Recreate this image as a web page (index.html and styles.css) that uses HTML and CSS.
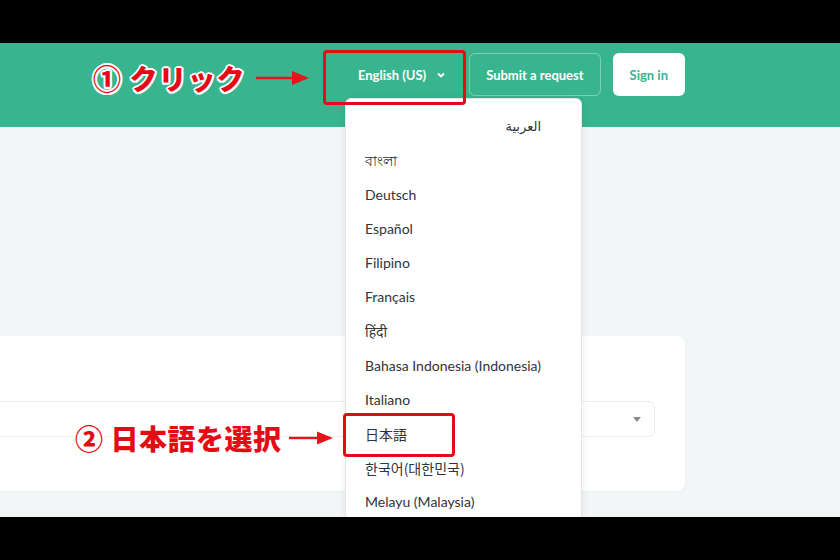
FILE: index.html
```html
<!DOCTYPE html>
<html lang="en">
<head>
<meta charset="utf-8">
<title>Language menu</title>
<link rel="stylesheet" href="styles.css">
</head>
<body>
<div class="screen">
  <header class="header">
    <nav class="nav">
      <button class="lang">English (US)
        <svg class="chev" width="8" height="6" viewBox="0 0 8 6"><path d="M1 1.5 L4 4.5 L7 1.5" fill="none" stroke="#fff" stroke-width="1.8"/></svg>
      </button>
      <a class="btn-outline">Submit a request</a>
      <a class="btn-white">Sign in</a>
    </nav>
  </header>
  <main class="main">
    <section class="card">
      <div class="select">
        <span class="caret"></span>
      </div>
    </section>
  </main>

  <ul class="menu">
    <li class="rtl" dir="rtl">العربية</li>
    <li>বাংলা</li>
    <li>Deutsch</li>
    <li>Español</li>
    <li>Filipino</li>
    <li>Français</li>
    <li>हिंदी</li>
    <li>Bahasa Indonesia (Indonesia)</li>
    <li>Italiano</li>
    <li class="ja">日本語</li>
    <li class="ko">한국어(대한민국)</li>
    <li>Melayu (Malaysia)</li>
  </ul>

  <div class="mark mark-1"></div>
  <div class="note note-1">
    <span class="note-text">① クリック</span>
    <svg class="arrow" width="54" height="16" viewBox="0 0 54 16"><path d="M0 8 H38" stroke="#e8141b" stroke-width="2.4"/><path d="M36 1 L53 8 L36 15 Z" fill="#e8141b"/></svg>
  </div>

  <div class="mark mark-2"></div>
  <div class="note note-2">
    <span class="note-text">② 日本語を選択</span>
    <svg class="arrow" width="45" height="16" viewBox="0 0 45 16"><path d="M0 8 H30" stroke="#e8141b" stroke-width="2.4"/><path d="M28 1.5 L44 8 L28 14.5 Z" fill="#e8141b"/></svg>
  </div>
</div>
</body>
</html>
```
FILE: styles.css
```css
* { box-sizing: border-box; }
html, body { margin: 0; padding: 0; }
body {
  background: #000;
  width: 840px;
  height: 560px;
  overflow: hidden;
  font-family: Lato, "Noto Sans", sans-serif;
}
.screen {
  position: relative;
  margin-top: 43px;
  height: 474px;
  overflow: hidden;
  background: #f2f6f6;
}
.header {
  height: 84px;
  background: #38b48f;
}
.nav {
  display: flex;
  justify-content: flex-end;
  align-items: flex-start;
  padding: 10px 155px 0 0;
}
.lang {
  display: flex;
  align-items: center;
  gap: 11px;
  height: 43px;
  padding: 0 16px 0 15px;
  margin-right: 8px;
  border: 0;
  background: transparent;
  color: #fff;
  font: 700 13px Lato, sans-serif;
}
.chev { margin-top: 1px; }
.btn-outline {
  display: flex;
  align-items: center;
  height: 43px;
  padding: 0 16px;
  border: 1px solid rgba(255,255,255,0.35);
  border-radius: 6px;
  color: #fff;
  font-weight: 700;
  font-size: 13px;
  margin-right: 12px;
}
.btn-white {
  display: flex;
  align-items: center;
  height: 43px;
  padding: 0 17px;
  border-radius: 6px;
  background: #fff;
  color: #38b48f;
  font-weight: 700;
  font-size: 13px;
}
.main {
  padding-top: 209px;
}
.card {
  margin-left: -40px;
  width: 725px;
  height: 155px;
  background: #fff;
  border-radius: 8px;
  padding: 65px 30px 0;
  box-shadow: 0 1px 2px rgba(0,0,0,0.03);
}
.select {
  height: 36px;
  border: 1px solid #e9eded;
  border-radius: 6px;
  display: flex;
  align-items: center;
  justify-content: flex-end;
  padding-right: 13px;
}
.caret {
  width: 0; height: 0;
  border-left: 4.5px solid transparent;
  border-right: 4.5px solid transparent;
  border-top: 5px solid #8a8a8a;
}
.menu {
  position: absolute;
  left: 345px;
  top: 55px;
  width: 237px;
  margin: 0;
  padding: 11px 0 0;
  list-style: none;
  background: #fff;
  border: 1px solid #e3e6e6;
  border-radius: 6px;
  box-shadow: 0 2px 8px rgba(0,0,0,0.08);
}
.menu li {
  height: 34.1px;
  line-height: 34px;
  padding: 0 20px 0 19px;
  font-size: 14px;
  color: #2f3437;
  white-space: nowrap;
}
.menu li.rtl {
  text-align: right;
  padding-right: 40px;
  font-family: "DejaVu Sans", sans-serif;
  font-size: 13px;
}
.menu li.ja { font-family: "Noto Sans CJK JP", sans-serif; font-size: 14px; }
.menu li.ko { font-family: "Noto Sans CJK KR", sans-serif; font-size: 14px; }
.mark {
  position: absolute;
  border: 3.5px solid #e60a14;
  border-radius: 4px;
}
.mark-1 { left: 323px; top: 7px; width: 143px; height: 55px; }
.mark-2 { left: 343px; top: 370px; width: 112px; height: 44px; }
.note {
  position: absolute;
  display: flex;
  align-items: center;
  gap: 11px;
}
.note-1 { left: 93px; top: 15px; }
.note-2 { left: 75px; top: 375px; gap: 8px; }
.note-text {
  font-family: "Noto Sans CJK JP", sans-serif;
  font-weight: 900;
  font-size: 28px;
  line-height: 40px;
  letter-spacing: 1px;
  color: #e60a14;
  white-space: nowrap;
  text-shadow:
    2px 0 #fff, -2px 0 #fff, 0 2px #fff, 0 -2px #fff,
    1.5px 1.5px #fff, -1.5px 1.5px #fff, 1.5px -1.5px #fff, -1.5px -1.5px #fff;
}
.note-2 .note-text { letter-spacing: 0.5px; }
.arrow { display: block; }
```
